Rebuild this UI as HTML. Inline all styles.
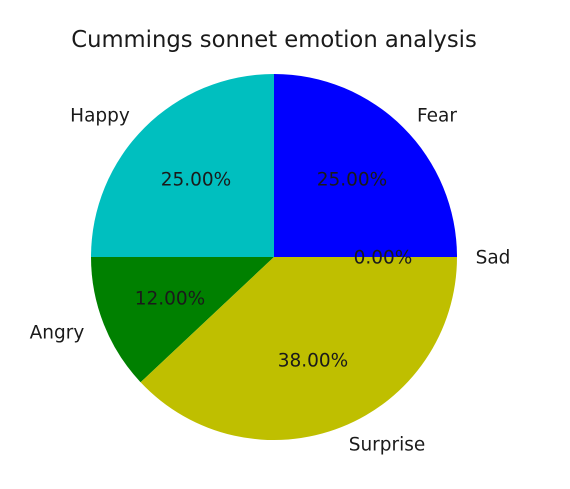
<!DOCTYPE html>
<html><head><style>
html,body{margin:0;padding:0;background:#fff;}
svg{display:block;}
text{font-family:"DejaVu Sans","Liberation Sans",sans-serif;fill:#1a1a1a;}
</style></head><body>
<svg width="570" height="489" viewBox="0 0 570 489" xmlns="http://www.w3.org/2000/svg">
<rect width="570" height="489" fill="#fff"/>
<text x="274" y="47" font-size="22.7" text-anchor="middle">Cummings sonnet emotion analysis</text>
<path d="M274,257 L457,257 A183,183 0 0 0 274,74 Z" fill="#0000ff"/>
<path d="M274,257 L274,74 A183,183 0 0 0 91,257 Z" fill="#00bfbf"/>
<path d="M274,257 L91,257 A183,183 0 0 0 140.6,382.3 Z" fill="#008000"/>
<path d="M274,257 L140.6,382.3 A183,183 0 0 0 457,257 Z" fill="#bfbf00"/>
<g font-size="18.5" dominant-baseline="central">
<text x="437" y="116" text-anchor="middle">Fear</text>
<text x="100" y="116" text-anchor="middle">Happy</text>
<text x="57" y="333" text-anchor="middle">Angry</text>
<text x="387" y="445" text-anchor="middle">Surprise</text>
<text x="493" y="258" text-anchor="middle">Sad</text>
<text x="352" y="180" text-anchor="middle">25.00%</text>
<text x="196" y="180" text-anchor="middle">25.00%</text>
<text x="170" y="299" text-anchor="middle">12.00%</text>
<text x="313" y="361" text-anchor="middle">38.00%</text>
<text x="383" y="258" text-anchor="middle">0.00%</text>
</g>
</svg>
</body></html>
